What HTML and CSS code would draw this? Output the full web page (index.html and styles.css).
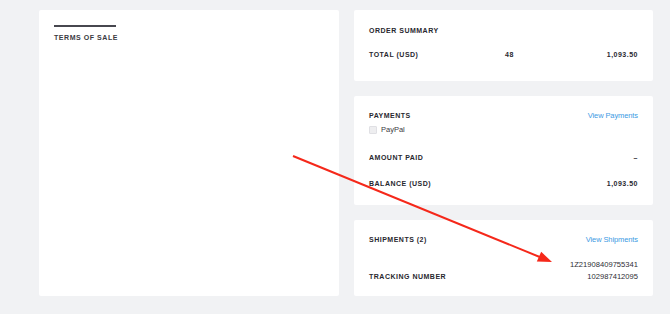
FILE: index.html
```html
<!DOCTYPE html>
<html lang="en">
<head>
  <meta charset="UTF-8">
  <title>Order Details</title>
  <link rel="stylesheet" href="styles.css">
</head>
<body>

  <div class="order-page">
    <!-- Terms -->
    <div class="card terms-card">
      <div class="terms-bar"></div>
      <h2 class="terms-title">Terms of Sale</h2>
    </div>

    <div class="side-column">
      <!-- Order Summary -->
      <div class="card summary-card">
        <h3 class="label">Order Summary</h3>
        <div class="total-row">
          <span class="label">Total (USD)</span>
          <span class="label">48</span>
          <span class="label amount">1,093.50</span>
        </div>
      </div>

      <!-- Payments -->
      <div class="card payments-card">
        <div class="row">
          <h3 class="label">Payments</h3>
          <a class="link" href="#">View Payments</a>
        </div>
        <label class="method"><span class="box"></span> PayPal</label>
        <div class="row paid-row">
          <span class="label strong">Amount Paid</span>
          <span class="label">&ndash;</span>
        </div>
        <div class="row balance-row">
          <span class="label">Balance (USD)</span>
          <span class="label">1,093.50</span>
        </div>
      </div>

      <!-- Shipments -->
      <div class="card shipments-card">
        <div class="row">
          <h3 class="label">Shipments (2)</h3>
          <a class="link" href="#">View Shipments</a>
        </div>
        <div class="row tracking-row">
          <span class="label">Tracking Number</span>
          <div class="tracking-list">
            <div>1Z21908409755341</div>
            <div>102987412095</div>
          </div>
        </div>
      </div>
    </div>
  </div>

  <!-- annotation arrow -->
  <svg class="annotation" width="670" height="314" viewBox="0 0 670 314">
    <line x1="293" y1="156" x2="541" y2="257.5" stroke="#f5281a" stroke-width="2"/>
    <polygon points="552,262 536.8,261.6 541.2,251.8" fill="#f5281a"/>
  </svg>

</body>
</html>
```

FILE: styles.css
```css
body {
  margin: 0;
  background: #f1f2f4;
  font-family: 'Liberation Sans', Arial, sans-serif;
  color: #2e2e35;
  min-height: 314px;
  position: relative;
}

.order-page {
  display: grid;
  grid-template-columns: 300px 1fr;
  gap: 15px;
  padding: 10px 17px 18px 39px;
}

.card {
  background: white;
  border-radius: 2px;
  padding: 15px;
  box-sizing: border-box;
}

.side-column {
  display: flex;
  flex-direction: column;
  gap: 15px;
}

h2, h3 {
  margin: 0;
}

.label {
  font-size: 7px;
  line-height: 9px;
  font-weight: 700;
  letter-spacing: 0.5px;
  text-transform: uppercase;
  color: #28282f;
  white-space: nowrap;
}

.terms-bar {
  width: 62px;
  height: 2px;
  background: #47474f;
}

.terms-title {
  margin-top: 6px;
  font-size: 7px;
  line-height: 9px;
  font-weight: 700;
  letter-spacing: 0.55px;
  text-transform: uppercase;
  color: #3a3a42;
  white-space: nowrap;
}

.row {
  display: flex;
  justify-content: space-between;
  align-items: center;
}

.summary-card {
  padding: 16px 15px 22px;
}

.total-row {
  display: grid;
  grid-template-columns: 136px auto 1fr;
  margin-top: 15px;
}

.total-row .amount {
  text-align: right;
}

.link {
  font-size: 7.5px;
  line-height: 9px;
  color: #3d9be3;
  text-decoration: none;
  letter-spacing: -0.1px;
}

.payments-card {
  padding: 15px 15px 17px;
}

.method {
  display: flex;
  align-items: center;
  gap: 4px;
  margin-top: 4px;
  font-size: 7.5px;
  line-height: 12px;
  color: #3a3a42;
}

.box {
  width: 8px;
  height: 8px;
  background: #eeeef0;
  border: 1px solid #e0e0e4;
  border-radius: 1px;
  box-sizing: border-box;
}

.paid-row {
  margin-top: 17px;
}

.balance-row {
  margin-top: 17px;
}

.shipments-card {
  padding: 15px 15px 13px;
}

.tracking-row {
  align-items: flex-end;
  margin-top: 15px;
}

.tracking-row .label {
  line-height: 12px;
}

.tracking-list {
  text-align: right;
  font-size: 7.6px;
  line-height: 12px;
  color: #2e2e35;
}

.annotation {
  position: absolute;
  top: 0;
  left: 0;
  pointer-events: none;
}
```
